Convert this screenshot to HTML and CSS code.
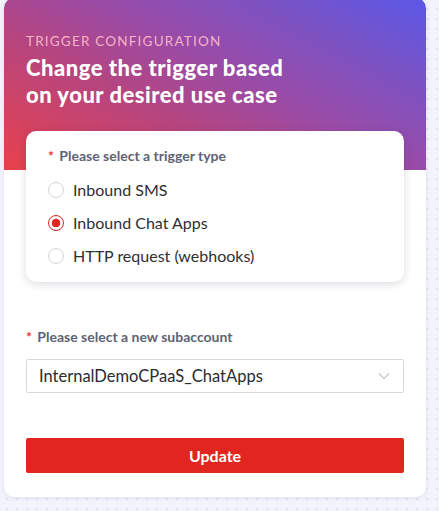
FILE: index.html
```html
<!DOCTYPE html>
<html>
<head>
<meta charset="utf-8">
<link rel="stylesheet" href="styles.css">
</head>
<body>
<div class="card">
  <div class="hero">
    <div class="eyebrow">TRIGGER CONFIGURATION</div>
    <div class="title">Change the trigger based<br>on your desired use case</div>
  </div>
  <div class="body">
    <div class="panel">
      <div class="label"><span class="req">*</span> Please select a trigger type</div>
      <div class="options">
        <div class="opt"><span class="radio"></span>Inbound SMS</div>
        <div class="opt"><span class="radio on"></span>Inbound Chat Apps</div>
        <div class="opt"><span class="radio"></span>HTTP request (webhooks)</div>
      </div>
    </div>
    <div class="label sub"><span class="req">*</span> Please select a new subaccount</div>
    <div class="select">
      <span>InternalDemoCPaaS_ChatApps</span>
      <svg width="12" height="8" viewBox="0 0 12 8"><path d="M1 1.5 L6 6.5 L11 1.5" fill="none" stroke="#c4c7cf" stroke-width="1.2"/></svg>
    </div>
    <div class="btn">Update</div>
  </div>
</div>
</body>
</html>
```
FILE: styles.css
```css
html, body { margin: 0; padding: 0; }
body {
  width: 439px;
  height: 511px;
  overflow: hidden;
  background-color: #f2f3fb;
  background-image: radial-gradient(circle, #e2e4f2 0.8px, transparent 1.2px);
  background-size: 10px 10px;
  background-position: 2px 4px;
  font-family: Lato, "Open Sans", sans-serif;
}
.card {
  margin: -2px 13px 0 4px;
  background: #fff;
  border-radius: 10px;
  overflow: hidden;
  box-shadow: 0 1px 4px rgba(60, 70, 120, 0.10);
  padding-bottom: 24px;
}
.hero {
  height: 172px;
  box-sizing: border-box;
  padding: 35px 22px 0;
  background: linear-gradient(28deg, #e8414b 0%, #b6457f 35%, #9a4ba6 55%, #7f52c0 75%, #5a58e8 100%);
}
.eyebrow {
  color: #f6b3c4;
  font-size: 13.5px;
  letter-spacing: 1.2px;
  line-height: 16px;
}
.title {
  margin-top: 5px;
  color: #fff;
  font-weight: 900;
  font-size: 22px;
  line-height: 27px;
  letter-spacing: 0.5px;
}
.body {
  padding: 0 22px;
}
.panel {
  margin-top: -39px;
  background: #fff;
  border-radius: 10px;
  box-shadow: 0 2px 8px rgba(40, 40, 70, 0.16);
  padding: 16px 22px 16px;
}
.label {
  font-size: 14px;
  font-weight: 700;
  color: #5d6374;
  line-height: 17px;
}
.req { color: #e8322c; margin-right: 2px; }
.options {
  margin-top: 16px;
  display: flex;
  flex-direction: column;
  gap: 13px;
}
.opt {
  display: flex;
  align-items: center;
  font-size: 16px;
  color: #2e2f33;
  line-height: 20px;
}
.radio {
  width: 16px;
  height: 16px;
  border: 1px solid #d4d6dc;
  border-radius: 50%;
  margin-right: 9px;
  box-sizing: border-box;
  flex: none;
}
.radio.on {
  border: 1px solid #e0261e;
  background: radial-gradient(circle, #e0261e 0 4px, #fff 4.6px);
}
.sub { margin-top: 46px; }
.select {
  margin-top: 14px;
  height: 34px;
  box-sizing: border-box;
  border: 1px solid #d5d7dd;
  border-radius: 2px;
  display: flex;
  align-items: center;
  justify-content: space-between;
  padding: 0 13px 0 12px;
  font-size: 16.5px;
  color: #2b2c30;
}
.btn {
  margin-top: 45px;
  height: 35px;
  background: #e0261e;
  border-radius: 2px;
  color: #fff;
  font-size: 16px;
  font-weight: 700;
  display: flex;
  align-items: center;
  justify-content: center;
}
```
